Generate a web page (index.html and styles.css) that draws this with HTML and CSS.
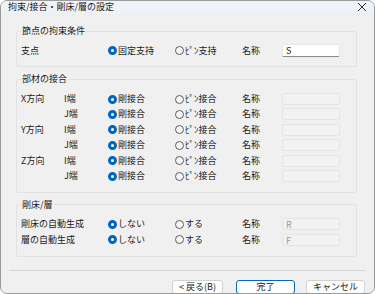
FILE: index.html
```html
<!DOCTYPE html>
<html lang="ja">

<head>
    <meta charset="UTF-8" />
    <title>拘束/接合・剛床/層の設定</title>
    <link rel="stylesheet" href="styles.css">
</head>

<body>
    <div class="dialog">
        <!-- Title bar -->
        <div class="titlebar">
            <span class="title">拘束/接合・剛床/層の設定</span>
            <svg class="close" width="10" height="10" viewBox="0 0 10 10">
                <path d="M1 1 L9 9 M9 1 L1 9" stroke="#333" stroke-width="1" fill="none" />
            </svg>
        </div>

        <div class="content">
            <!-- 節点 -->
            <fieldset class="group">
                <legend>節点の拘束条件</legend>
                <div class="grid">
                    <span class="wide">支点</span>
                    <label class="radio on"><i></i>固定支持</label>
                    <label class="radio"><i></i>ﾋﾟﾝ支持</label>
                    <span>名称</span>
                    <span class="field">S</span>
                </div>
            </fieldset>

            <!-- 部材 -->
            <fieldset class="group">
                <legend>部材の接合</legend>
                <div class="grid">
                    <span>X方向</span>
                    <span class="end">I端</span>
                    <label class="radio on"><i></i>剛接合</label>
                    <label class="radio"><i></i>ﾋﾟﾝ接合</label>
                    <span>名称</span>
                    <span class="field off"></span>

                    <span></span>
                    <span class="end">J端</span>
                    <label class="radio on"><i></i>剛接合</label>
                    <label class="radio"><i></i>ﾋﾟﾝ接合</label>
                    <span>名称</span>
                    <span class="field off"></span>

                    <span>Y方向</span>
                    <span class="end">I端</span>
                    <label class="radio on"><i></i>剛接合</label>
                    <label class="radio"><i></i>ﾋﾟﾝ接合</label>
                    <span>名称</span>
                    <span class="field off"></span>

                    <span></span>
                    <span class="end">J端</span>
                    <label class="radio on"><i></i>剛接合</label>
                    <label class="radio"><i></i>ﾋﾟﾝ接合</label>
                    <span>名称</span>
                    <span class="field off"></span>

                    <span>Z方向</span>
                    <span class="end">I端</span>
                    <label class="radio on"><i></i>剛接合</label>
                    <label class="radio"><i></i>ﾋﾟﾝ接合</label>
                    <span>名称</span>
                    <span class="field off"></span>

                    <span></span>
                    <span class="end">J端</span>
                    <label class="radio on"><i></i>剛接合</label>
                    <label class="radio"><i></i>ﾋﾟﾝ接合</label>
                    <span>名称</span>
                    <span class="field off"></span>
                </div>
            </fieldset>

            <!-- 剛床/層 -->
            <fieldset class="group">
                <legend>剛床/層</legend>
                <div class="grid">
                    <span class="wide">剛床の自動生成</span>
                    <label class="radio on"><i></i>しない</label>
                    <label class="radio"><i></i>する</label>
                    <span>名称</span>
                    <span class="field off">R</span>

                    <span class="wide">層の自動生成</span>
                    <label class="radio on"><i></i>しない</label>
                    <label class="radio"><i></i>する</label>
                    <span>名称</span>
                    <span class="field off">F</span>
                </div>
            </fieldset>
        </div>

        <div class="separator"></div>

        <div class="buttons">
            <button class="btn btn-back">&lt; 戻る(B)</button>
            <button class="btn btn-default">完了</button>
            <button class="btn">キャンセル</button>
        </div>
    </div>
</body>

</html>
```

FILE: styles.css
```css
* {
    box-sizing: border-box;
    margin: 0;
    padding: 0;
    font-family: "Noto Sans CJK JP", "Noto Sans", sans-serif;
}

body {
    width: 375px;
    height: 294px;
    background: #ffffff;
    color: #1b1b1b;
    font-size: 9px;
}

.dialog {
    width: 375px;
    height: 294px;
    border: 1px solid #9a9a9a;
    border-radius: 7px;
    background: #f0f0f0;
    overflow: hidden;
    display: flex;
    flex-direction: column;
}

.titlebar {
    height: 21px;
    background: #eef3f9;
    display: flex;
    align-items: center;
    justify-content: space-between;
    padding: 0 7px 0 7px;
}

.title {
    font-size: 9px;
    line-height: 12px;
}

.close {
    display: block;
}

.content {
    padding: 12px 17px 0 15px;
    display: flex;
    flex-direction: column;
    gap: 6px;
}

.group {
    border: 1px solid #e2e2e2;
    border-radius: 2px;
    padding: 6px 16px 8px 4px;
}

.group legend {
    font-size: 9px;
    line-height: 12px;
    padding: 0 1px;
}

.grid {
    display: grid;
    grid-template-columns: 42px 45px 67px 67px 40px 58px;
    grid-auto-rows: 15.4px;
    align-items: center;
    line-height: 12px;
}

.wide {
    grid-column: span 2;
}

.end {
    padding-left: 1px;
}

.radio {
    display: flex;
    align-items: center;
    gap: 1px;
}

.radio i {
    width: 9px;
    height: 9px;
    border-radius: 50%;
    border: 1px solid #5c5c5c;
    background: #f7f7f7;
    display: block;
}

.radio.on i {
    border: 3px solid #0067c0;
    background: #ffffff;
}

.field {
    height: 13px;
    background: #ffffff;
    border: 1px solid #e6e6e6;
    border-bottom-color: #8a8a8a;
    border-radius: 2px;
    padding-left: 3px;
    line-height: 11px;
}

.field.off {
    height: 12px;
    background: #f2f2f2;
    border-color: #e4e4e4;
    color: #9a9a9a;
}

.separator {
    margin: 13px 9px 0 8px;
    border-top: 1px solid #d6d6d6;
}

.buttons {
    display: flex;
    justify-content: flex-end;
    gap: 11px;
    padding: 9px 9px 0 0;
}

.btn {
    width: 59px;
    height: 14px;
    font-size: 9px;
    line-height: 12px;
    color: #1b1b1b;
    background: #fdfdfd;
    border: 1px solid #d2d2d2;
    border-radius: 3px;
}

.btn-back {
    width: 51px;
    margin-right: 2px;
}

.btn-default {
    border-color: #0067c0;
}
```
